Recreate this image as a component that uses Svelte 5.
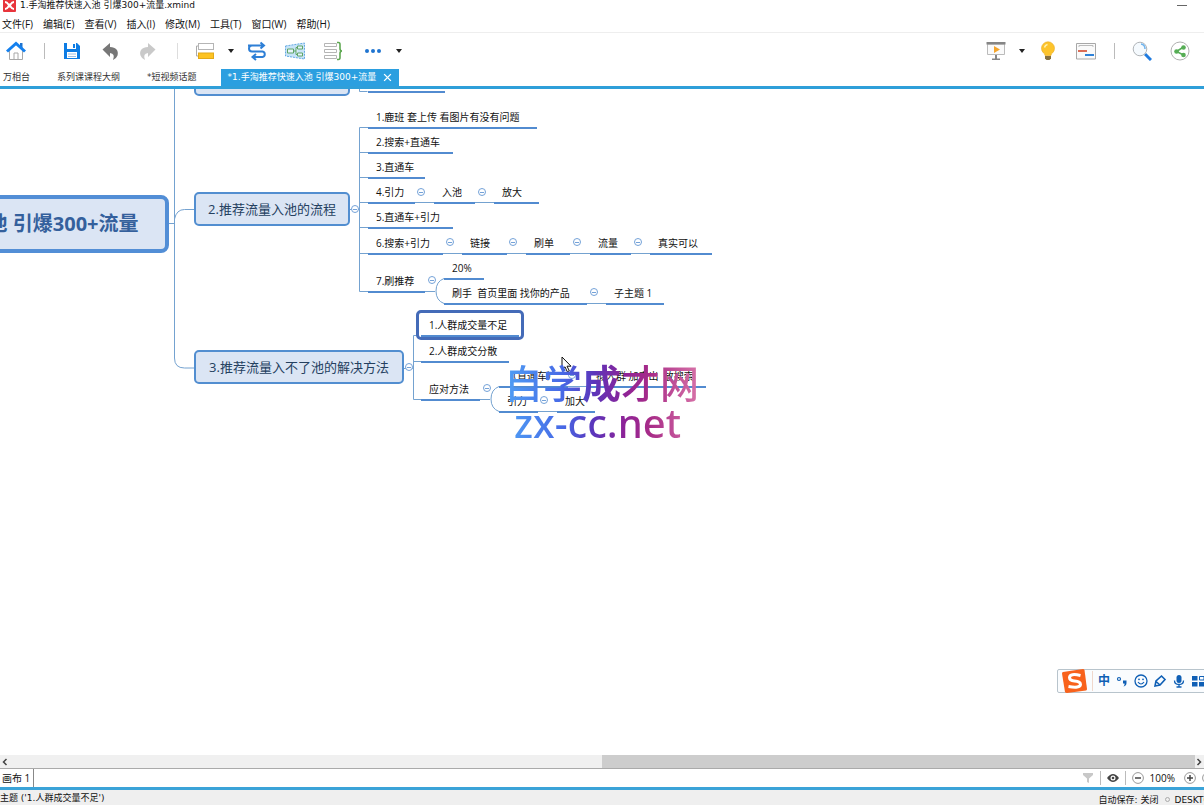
<script lang="ts">
type MapNode = { text: string; x: number; line: number; w: number };

let zoom = 100;
let activeTab = 3;

const menus = ["文件(F)", "编辑(E)", "查看(V)", "插入(I)", "修改(M)", "工具(T)", "窗口(W)", "帮助(H)"];
const tabs = ["万相台", "系列课课程大纲", "*短视频话题", "*1.手淘推荐快速入池 引爆300+流量"];

// x, underline y and width on the canvas
const nodes: MapNode[] = [
	{ text: "", x: 368, line: 2, w: 77 },
	{ text: "1.鹿班 套上传 看图片有没有问题", x: 368, line: 38, w: 169 },
	{ text: "2.搜索+直通车", x: 368, line: 63, w: 85 },
	{ text: "3.直通车", x: 368, line: 88, w: 57 },
	{ text: "4.引力", x: 368, line: 113, w: 47 },
	{ text: "入池", x: 434, line: 113, w: 41 },
	{ text: "放大", x: 494, line: 113, w: 45 },
	{ text: "5.直通车+引力", x: 368, line: 138, w: 85 },
	{ text: "6.搜索+引力", x: 368, line: 164, w: 75 },
	{ text: "链接", x: 462, line: 164, w: 45 },
	{ text: "刷单", x: 526, line: 164, w: 44 },
	{ text: "流量", x: 590, line: 164, w: 41 },
	{ text: "真实可以", x: 650, line: 164, w: 62 },
	{ text: "7.刷推荐", x: 368, line: 202, w: 57 },
	{ text: "20%", x: 444, line: 189, w: 40 },
	{ text: "刷手  首页里面 找你的产品", x: 444, line: 214, w: 143 },
	{ text: "子主题 1", x: 606, line: 214, w: 58 },
	{ text: "1.人群成交量不足", x: 421, line: 246, w: 98 },
	{ text: "2.人群成交分散", x: 421, line: 272, w: 88 },
	{ text: "应对方法", x: 421, line: 310, w: 59 },
	{ text: "（直通车）", x: 499, line: 297, w: 69 },
	{ text: "拟人群 加产出  放搜索", x: 588, line: 297, w: 118 },
	{ text: "引力", x: 499, line: 322, w: 39 },
	{ text: "加大", x: 557, line: 322, w: 38 },
];

const topics = [
	{ text: "", x: 194, y: -27, w: 156 },
	{ text: "2.推荐流量入池的流程", x: 194, y: 103, w: 156 },
	{ text: "3.推荐流量入不了池的解决方法", x: 194, y: 261, w: 210 },
];

const toggles = [
	[355, 121], [421, 104], [482, 104], [450, 154], [513, 154], [577, 154], [638, 154],
	[432, 192], [594, 204], [409, 279], [487, 300], [572, 287], [544, 312],
];
</script>

<div class="app">
	<header class="title-bar">
		<svg class="logo" viewBox="0 0 13 13">
			<rect width="13" height="13" rx="1" fill="#e8353c" />
			<path d="M2 3q2 0 3.5 2.5h2Q9 3 11 3M2 10q2 0 3.5-2.5h2Q9 10 11 10M5 6.5h3" fill="none" stroke="#fff" stroke-width="2" />
		</svg>
		<span class="title">1.手淘推荐快速入池 引爆300+流量.xmind</span>
		<button class="minimize" aria-label="最小化"></button>
	</header>

	<nav class="menu">
		{#each menus as item}
			<button>{item}</button>
		{/each}
	</nav>

	<div class="toolbar">
		<button class="tool home" aria-label="主页">
			<svg viewBox="0 0 20 20">
				<path d="M3.500 9v9.500h13V9L10 3z" fill="#fff" stroke="#a8a8a8" />
				<path d="M8 18v-6h4v6" fill="#fff" stroke="#a8a8a8" />
				<path d="M14 2h2.500v5H14z" fill="#1f74d0" />
				<path d="M1 10.500L10 2.500l9 8" fill="none" stroke="#1480ee" stroke-width="3" />
			</svg>
		</button>
		<i class="sep"></i>
		<button class="tool save" aria-label="保存">
			<svg viewBox="0 0 20 20">
				<path d="M2 2h13l3 3v13H2z" fill="#0d7ce4" />
				<path d="M5 2h9v6H5z" fill="#fff" />
				<path d="M11 3h2v4h-2z" fill="#0d7ce4" />
				<path d="M5 11h10v6H5z" fill="#fff" />
				<path d="M6 13h8M6 15.500h8" stroke="#9bbfe5" />
			</svg>
		</button>
		<button class="tool undo" aria-label="撤销">
			<svg viewBox="0 0 20 20">
				<path d="M2.500 8.500L10 2v4c6 0 9 4 7.500 8.500Q16.500 17.500 13 19q2.500-6.500-3-7v4z" fill="#777" />
			</svg>
		</button>
		<button class="tool redo" aria-label="重做">
			<svg viewBox="0 0 20 20">
				<path d="M17.500 8.500L10 2v4c-6 0-9 4-7.500 8.500Q3.500 17.500 7 19q-2.500-6.500 3-7v4z" fill="#c9c9c9" />
			</svg>
		</button>
		<i class="sep light"></i>
		<button class="tool topic-tool" aria-label="主题">
			<svg viewBox="0 0 20 20">
				<path d="M4 5H1.500v10H4" fill="none" stroke="#aaa" />
				<rect x="3.500" y="2.500" width="15" height="6" fill="#fff" stroke="#b5b5b5" />
				<rect x="3.500" y="12" width="15" height="5.500" fill="#fdc322" stroke="#e2a91a" />
			</svg>
		</button>
		<button class="drop" aria-label="更多主题"></button>
		<button class="tool relation" aria-label="联系">
			<svg viewBox="0 0 20 20">
				<path d="M1 4.500h15M13.500 1.500l3.500 3-3.500 3M7 4.500H5a3 3 0 0 0 0 6h10.500a2.800 2.800 0 0 1 0 5.500H6M9 13l-3.500 3L9 19" fill="none" stroke="#2e7fd6" stroke-width="2" />
			</svg>
		</button>
		<button class="tool boundary" aria-label="外框">
			<svg viewBox="0 0 20 20">
				<path d="M.500 5L19.500 2v16L.500 15z" fill="#c7e3f8" stroke="#63a9e2" stroke-dasharray="2 1" />
				<path d="M2.500 8h6v4h-6zM12.500 5h5v3h-5zM12.500 12h5v3h-5zM8.500 10H11M12.500 6.500H11v7h1.500" fill="#fff" fill-opacity=".6" stroke="#5fa566" />
			</svg>
		</button>
		<button class="tool summary" aria-label="概要">
			<svg viewBox="0 0 20 20">
				<path d="M1.500 2.500h12v3h-12zM1.500 8.500h12v3h-12zM1.500 14.500h12v3h-12z" fill="#fff" stroke="#b5b5b5" />
				<path d="M14 1.500h1.500q1.500 0 1.500 2v4q0 2.500 2 2.500-2 0-2 2.500v4q0 2-1.500 2H14" fill="none" stroke="#5fa852" stroke-width="1.600" />
			</svg>
		</button>
		<button class="tool dots" aria-label="更多">
			<svg viewBox="0 0 20 20">
				<g fill="#1f74d0"><circle cx="4" cy="10" r="2" /><circle cx="10" cy="10" r="2" /><circle cx="16" cy="10" r="2" /></g>
			</svg>
		</button>
		<button class="drop" aria-label="更多工具"></button>

		<div class="tools-right">
			<button class="tool" aria-label="演示">
				<svg viewBox="0 0 20 20">
					<path d="M1.500 3h17v10.500h-17z" fill="#fafafa" stroke="#bbb" />
					<path d="M.500 1h19v2.500H.500zM9 14h2v4H9zM6 17.500h8V19H6z" fill="#858585" />
					<path d="M8 5l6 3.500L8 12z" fill="#f5a52c" />
				</svg>
			</button>
			<button class="drop" aria-label="演示选项"></button>
			<button class="tool" aria-label="头脑风暴">
				<svg viewBox="0 0 20 20">
					<path d="M7 14.500Q7 12.500 5.300 11.800a6.500 6.500 0 1 1 9.400 0q-1.700.700-1.700 2.700z" fill="#fdc42b" stroke="#e9a91f" stroke-width=".600" />
					<path d="M7 15h6v2.500L11.500 19h-3L7 17.500z" fill="#87713e" />
					<path d="M6.500 6.500Q7 4 9.500 3.500" stroke="#fff2b5" fill="none" stroke-width="1.500" />
				</svg>
			</button>
			<button class="tool" aria-label="甘特图">
				<svg viewBox="0 0 20 20">
					<path d="M.500 2.500h19v15.500H.500z" fill="#fafafa" stroke="#a8a8a8" />
					<path d="M3 6V4.500h14V6" fill="none" stroke="#bbb" />
					<path d="M2 10h9" stroke="#db6c56" stroke-width="2" />
					<path d="M9 14h9" stroke="#2f82d8" stroke-width="2" />
				</svg>
			</button>
			<i class="sep"></i>
			<button class="tool" aria-label="搜索">
				<svg viewBox="0 0 20 20">
					<path d="M13 13l6 6" stroke="#1f7be0" stroke-width="3" />
					<circle cx="8" cy="8" r="6.800" fill="#f5fafe" stroke="#b0b4b8" />
					<path d="M9 3q4 .500 4 5" fill="none" stroke="#70b4ee" stroke-width="1.500" />
				</svg>
			</button>
			<button class="tool" aria-label="分享">
				<svg viewBox="0 0 20 20">
					<circle cx="10" cy="10" r="9" fill="#fff" stroke="#b0b0b0" />
					<path d="M13.500 6L6.500 10.500l7 3.500" fill="none" stroke="#56ad55" stroke-width="1.500" />
					<g fill="#56ad55"><circle cx="13.500" cy="6.500" r="2.300" /><circle cx="6.500" cy="10.500" r="2.300" /><circle cx="13.500" cy="14" r="2.300" /></g>
				</svg>
			</button>
		</div>
	</div>

	<div class="tabs">
		{#each tabs as tab, i}
			<button class="tab" class:active={activeTab === i} on:click={() => (activeTab = i)}>
				{tab}
				{#if activeTab === i}
					<svg viewBox="0 0 8 8"><path d="M1 1l6 6M7 1L1 7" stroke="#fff" stroke-width="1.200" /></svg>
				{/if}
			</button>
		{/each}
	</div>

	<main class="canvas">
		<svg class="links" width="1204" height="400" fill="none" stroke="#74a2d0">
			<path d="M169 134.500h6M174.500 0v269q0 10 10 10h10M174.500 130q2-9.500 10-9.500h10" />
			<path d="M359.500 0v2.500h8M350 120.500h9M359.500 202.500V38.500h8.500M359.500 63.500h8.500M359.500 88.500h8.500M359.500 113.500H494M359.500 138.500h8.500M359.500 164.500H650M359.500 202.500H435" />
			<path d="M444 189.500q-8 3-8 12.500t8 12.500h162" />
			<path d="M404 279.500h9M421 246.500h-7.500v64H490M413.500 272.500h8" />
			<path d="M499 297.500q-8 3-8 12.500t8 12.500h60M499 297.500h90" />
		</svg>

		<div class="root">1.手淘推荐快速入池 引爆300+流量</div>
		{#each topics as t}
			<div class="topic" style="left: {t.x}px; top: {t.y}px; width: {t.w}px">{t.text}</div>
		{/each}
		<div class="selection"></div>
		{#each nodes as n}
			<div class="node" style="left: {n.x}px; top: {n.line - 20}px; width: {n.w}px">{n.text}</div>
		{/each}
		{#each toggles as [x, y]}
			<button class="toggle" aria-label="折叠" style="left: {x - 4}px; top: {y - 5}px"></button>
		{/each}

		<svg class="cursor" viewBox="0 0 11 17">
			<path d="M1 1v12.500l3-2.700 2.300 5 2-1-2.300-4.600h4z" fill="#fff" stroke="#111" />
		</svg>

		<div class="watermark">
			<span class="cn">自学<b>成</b>才网</span>
			<span class="url">zx-cc.net</span>
		</div>
	</main>

	<div class="scrollbar">
		<svg viewBox="0 0 8 8"><path d="M5.500 1L2.500 4l3 3" fill="none" stroke="#444" stroke-width="1.500" /></svg>
		<div class="track"><div class="thumb"></div></div>
		<svg viewBox="0 0 8 8"><path d="M2.500 1l3 3-3 3" fill="none" stroke="#444" stroke-width="1.500" /></svg>
	</div>

	<div class="sheets">
		<button class="sheet">画布 1</button>
		<div class="view-tools">
			<button aria-label="筛选"><svg viewBox="0 0 12 12"><path d="M1 1h10v2L7 6.500V11L5 10V6.500L1 3z" fill="#c8c8c8" /></svg></button>
			<i></i>
			<button aria-label="显示"><svg viewBox="0 0 12 12"><path d="M0 6q6-8 12 0-6 8-12 0z" fill="#444" /><circle cx="6" cy="6" r="2.500" fill="#fff" /><circle cx="6" cy="6" r="1.300" fill="#444" /></svg></button>
			<i></i>
			<button aria-label="缩小" on:click={() => (zoom -= 10)}><svg viewBox="0 0 12 12"><circle cx="6" cy="6" r="5.400" fill="#fff" stroke="#999" /><path d="M3 6h6" stroke="#444" stroke-width="1.500" /></svg></button>
			<span>{zoom}%</span>
			<button aria-label="放大" on:click={() => (zoom += 10)}><svg viewBox="0 0 12 12"><circle cx="6" cy="6" r="5.400" fill="#fff" stroke="#999" /><path d="M3 6h6M6 3v6" stroke="#444" stroke-width="1.500" /></svg></button>
			<button class="edge" aria-label="适应画布"><svg viewBox="0 0 12 12"><circle cx="6" cy="6" r="5.400" fill="#fff" stroke="#999" /></svg></button>
		</div>
	</div>

	<footer class="status">
		<span>主题 ('1.人群成交量不足')</span>
		<span class="saved">自动保存: 关闭<i></i>DESKTOP</span>
	</footer>

	<div class="ime">
		<svg class="sogou" viewBox="0 0 26 24">
			<path d="M2 3L22 0q1 0 1.500 1L26 20q0 1-1 1.500L6 24q-1.500 0-2-1L1 4.500Q1 3.200 2 3z" fill="#f8621c" />
			<path d="M19.500 6.500Q9 4 8.500 8.500q0 3 5 3.500 6 .600 6 3.500-.500 4-12 2" fill="none" stroke="#fff" stroke-width="3" />
		</svg>
		<i></i>
		<button>中</button>
		<button aria-label="标点"><svg viewBox="0 0 14 14"><circle cx="4" cy="5" r="1.500" fill="none" stroke="#0f5fb5" stroke-width="1.200" /><path d="M8 6.500h3.500V9q0 2.500-3 3.500 1.500-1.500 1-3H8z" fill="#0f5fb5" /></svg></button>
		<button aria-label="表情"><svg viewBox="0 0 14 14"><circle cx="7" cy="7" r="6" fill="none" stroke="#0f5fb5" stroke-width="1.300" /><path d="M4 8q3 4 6 0" fill="none" stroke="#0f5fb5" stroke-width="1.200" /><circle cx="5" cy="5.300" r=".900" fill="#0f5fb5" /><circle cx="9" cy="5.300" r=".900" fill="#0f5fb5" /></svg></button>
		<button aria-label="手写"><svg viewBox="0 0 14 14"><path d="M2 12l1-5 5.500-5L12 5.500 7 11zM3 7.500l4 3.500" fill="none" stroke="#0f5fb5" stroke-width="1.600" /></svg></button>
		<button aria-label="语音"><svg viewBox="0 0 14 14"><rect x="4.500" y="1" width="5" height="8" rx="2.500" fill="#0f5fb5" /><path d="M2.500 6.500q0 4 4.500 4t4.500-4M7 10v3M4.500 13h5" fill="none" stroke="#0f5fb5" stroke-width="1.300" /></svg></button>
		<button aria-label="工具箱"><svg viewBox="0 0 14 14"><path d="M1 2h5.500v4.500H1zM1 8h5.500v4.500H1zM8 8h5.500v4.500H8z" fill="#0f5fb5" /><path d="M8.500 2.500h4.500V6H8.500z" fill="none" stroke="#0f5fb5" /></svg></button>
	</div>
</div>

<style>
	:global(body) {
		overflow: hidden;
	}

	.app {
		position: relative;
		display: flex;
		flex-direction: column;
		height: 100vh;
		overflow: hidden;
		background: #fff;
		color: #111;
		font: 10px/16px "Open Sans", "Noto Sans CJK SC", sans-serif;
	}

	button {
		margin: 0;
		padding: 0;
		border: 0;
		background: none;
		color: inherit;
		font: inherit;
		white-space: nowrap;
	}

	svg {
		display: block;
	}

	.title-bar {
		display: flex;
		align-items: center;
		gap: 4px;
		box-sizing: border-box;
		height: 12px;
		padding: 0 17px 2px 3px;
		flex: none;
	}

	.title-bar,
	.tabs,
	.status {
		font-family: "DejaVu Sans", "Noto Sans CJK SC", sans-serif;
		font-size: 9px;
	}

	.logo {
		width: 13px;
		height: 13px;
	}

	.minimize {
		width: 10px;
		height: 1px;
		margin-left: auto;
		background: #666;
	}

	.menu {
		display: flex;
		gap: 10px;
		box-sizing: border-box;
		flex: none;
		height: 21px;
		padding: 0 2px;
		border-bottom: 1px solid #eee;
	}

	.menu button {
		line-height: 24px;
	}

	.toolbar {
		display: flex;
		align-items: center;
		flex: none;
		height: 36px;
		padding: 0 14px 0 6px;
	}

	.tool {
		width: 20px;
		height: 20px;
	}

	.tool svg {
		width: 20px;
		height: 20px;
	}

	.sep {
		width: 1px;
		height: 16px;
		margin: 0 17px 0 18px;
		background: #bbb;
	}

	.sep.light {
		background: #ddd;
	}

	.undo,
	.redo {
		margin-left: 18px;
	}

	.undo + .redo + .sep {
		margin-left: 19px;
	}

	.drop {
		width: 6px;
		height: 4px;
		margin: 0 13px;
		background: #222;
		clip-path: polygon(0 0, 100% 0, 50% 100%);
	}

	.boundary,
	.summary {
		margin-left: 18px;
	}

	.dots {
		margin-left: 20px;
	}

	.tools-right {
		display: flex;
		align-items: center;
		margin-left: auto;
	}

	.tools-right .tool + .tool {
		margin-left: 18px;
	}

	.tabs {
		display: flex;
		flex: none;
		height: 17px;
		border-bottom: 3px solid #2f9fd9;
	}

	.tab {
		padding: 0 24px 0 3px;
		line-height: 17px;
		color: #333;
	}

	.tab.active {
		display: flex;
		align-items: center;
		gap: 7px;
		padding: 0 7px;
		background: #2b9fe0;
		color: #fff;
	}

	.tab svg {
		width: 9px;
		height: 9px;
	}

	.canvas {
		position: relative;
		flex: 1;
		overflow: hidden;
	}

	.links {
		position: absolute;
		left: 0;
		top: 0;
	}

	.root {
		position: absolute;
		left: -200px;
		top: 106px;
		box-sizing: border-box;
		width: 369px;
		border: 4px solid #528ed6;
		border-radius: 8px;
		background: #dbe5f4;
		color: #34609c;
		font-size: 20px;
		font-weight: bold;
		line-height: 50px;
		text-align: center;
		white-space: nowrap;
	}

	.topic {
		position: absolute;
		box-sizing: border-box;
		height: 34px;
		border: 2px solid #528ed0;
		border-radius: 5px;
		background: #dbe5f4;
		color: #24405f;
		font-size: 13px;
		line-height: 30px;
		text-align: center;
		white-space: nowrap;
	}

	.node {
		position: absolute;
		box-sizing: border-box;
		height: 22px;
		padding-left: 8px;
		border-bottom: 2px solid #528bd0;
		line-height: 20px;
		white-space: pre;
	}

	.selection {
		position: absolute;
		left: 416px;
		top: 221px;
		box-sizing: border-box;
		width: 108px;
		height: 30px;
		border: 3px solid #446bb8;
		border-radius: 5px;
		background: #fff;
	}

	.toggle {
		position: absolute;
		box-sizing: border-box;
		width: 8px;
		height: 8px;
		border: 1px solid #74a2d8;
		border-radius: 50%;
		background: linear-gradient(#74a2d8, #74a2d8) center / 4px 1px no-repeat #fff;
	}

	.cursor {
		position: absolute;
		left: 561px;
		top: 267px;
		width: 11px;
		height: 17px;
	}

	.watermark {
		position: absolute;
		left: 504px;
		top: 274px;
		background: linear-gradient(90deg, #4fa0f5, #4769e6 30%, #5b35bb 46%, #8e2397 62%, #a82c88 75%, #d873a8);
		background-clip: text;
		color: transparent;
		font-family: "Noto Sans", "Noto Sans CJK SC", sans-serif;
		font-size: 39px;
		font-weight: 500;
		line-height: 40px;
		text-align: center;
		white-space: nowrap;
	}

	.watermark span {
		display: block;
	}

	.watermark .url {
		padding-right: 8px;
		font-size: 40px;
	}

	.scrollbar {
		display: flex;
		align-items: center;
		flex: none;
		height: 13px;
		padding: 0 1px;
		background: #f0f0f0;
	}

	.scrollbar svg {
		width: 8px;
		height: 8px;
	}

	.track {
		flex: 1;
		height: 100%;
	}

	.thumb {
		width: 50%;
		height: 100%;
		margin-left: auto;
		background: #cdcdcd;
	}

	.sheets {
		display: flex;
		flex: none;
		height: 18px;
		border-top: 1px solid #aaa;
		border-bottom: 3px solid #3ba3d8;
	}

	.sheet {
		padding: 0 3px 0 2px;
		border-right: 1px solid #888;
	}

	.view-tools {
		display: flex;
		align-items: center;
		gap: 6px;
		margin-left: auto;
	}

	.view-tools i {
		width: 1px;
		height: 14px;
		background: #bbb;
	}

	.view-tools span {
		margin-right: 3px;
	}

	.view-tools svg {
		width: 12px;
		height: 12px;
	}

	.view-tools .edge {
		width: 2px;
		overflow: hidden;
	}

	.status {
		display: flex;
		justify-content: space-between;
		flex: none;
		height: 15px;
		background: #efefef;
		white-space: nowrap;
	}

	.saved {
		margin-right: -12px;
		line-height: 20px;
	}

	.saved i {
		display: inline-block;
		width: 3px;
		height: 3px;
		margin: 0 4px 1px 7px;
		border: 1px solid #aaa;
		border-radius: 50%;
	}

	.ime {
		position: absolute;
		right: -2px;
		bottom: 112px;
		display: flex;
		align-items: center;
		gap: 5px;
		height: 22px;
		padding-left: 3px;
		border: 1px solid #b8c4cc;
		border-radius: 2px;
		background: #fafcfe;
		color: #0f5fb5;
		font-size: 12px;
		font-weight: bold;
	}

	.ime i {
		width: 1px;
		height: 20px;
		background: #f0d8cc;
	}

	.ime svg {
		width: 14px;
		height: 14px;
	}

	.ime .sogou {
		width: 26px;
		height: 24px;
	}
</style>
